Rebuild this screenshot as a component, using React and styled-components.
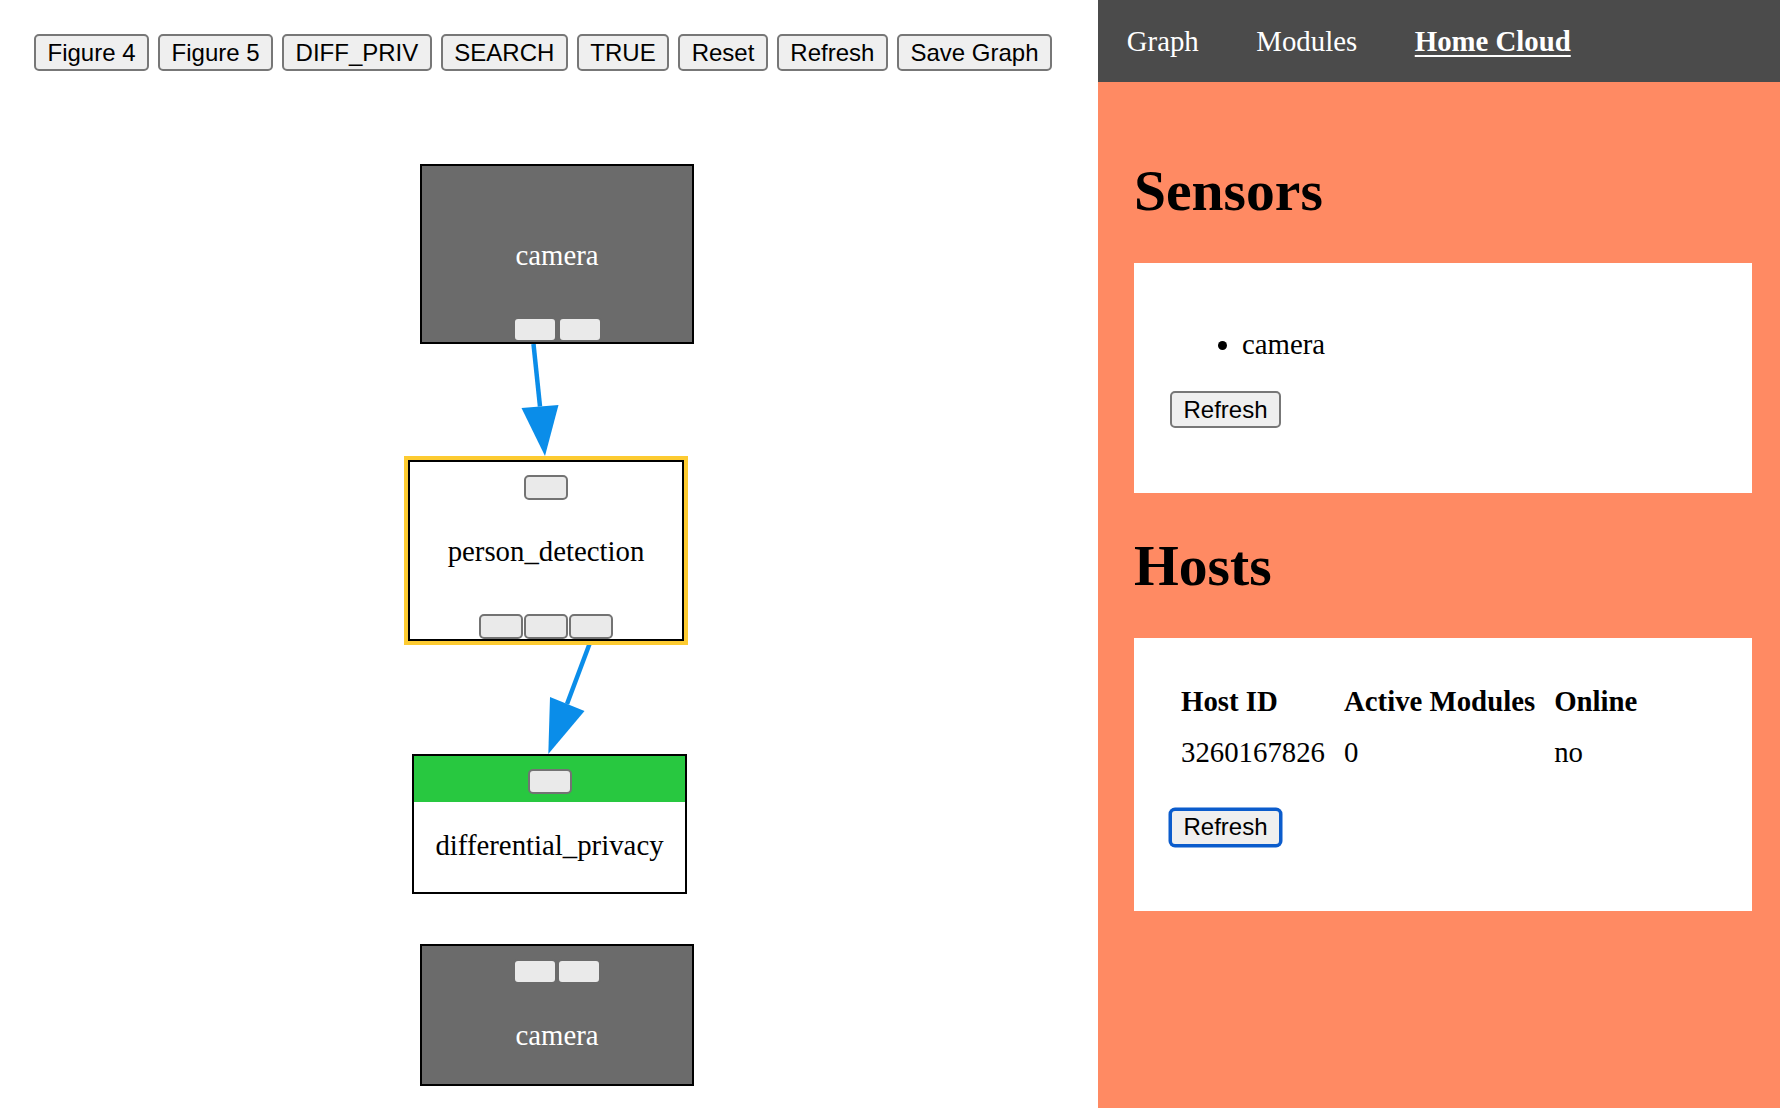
import React from 'react';
import styled, { createGlobalStyle } from 'styled-components';

const GlobalStyle = createGlobalStyle`
  html, body {
    margin: 0;
    padding: 0;
    background: #ffffff;
  }

  body {
    font-family: "Liberation Serif", "Times New Roman", serif;
    font-size: 28.8px;
    color: #000000;
  }
`;

// graph canvas starts right under the toolbar
const CANVAS_TOP = 71;

const NODES = [
  {
    id: 'camera-1',
    label: 'camera',
    x: 420,
    y: 164,
    w: 274,
    h: 180,
    dark: true,
    top: 0,
    bottom: 2,
  },
  {
    id: 'person-detection',
    label: 'person_detection',
    x: 408,
    y: 460,
    w: 276,
    h: 181,
    selected: true,
    top: 1,
    bottom: 3,
  },
  {
    id: 'differential-privacy',
    label: 'differential_privacy',
    x: 412,
    y: 754,
    w: 275,
    h: 140,
    header: '#28c840',
    top: 1,
    bottom: 0,
  },
  {
    id: 'camera-2',
    label: 'camera',
    x: 420,
    y: 944,
    w: 274,
    h: 142,
    dark: true,
    top: 2,
    bottom: 0,
  },
];

const EDGES = [
  { id: 'e1', from: [533.5, 344], to: [540, 406.5], head: '545,456 521.5,408 558.5,405' },
  { id: 'e2', from: [591, 640], to: [567, 704], head: '548.3,754 550,697 584.5,711' },
];

const TOOLBAR = ['Figure 4', 'Figure 5', 'DIFF_PRIV', 'SEARCH', 'TRUE', 'Reset', 'Refresh', 'Save Graph'];

const range = (n) => Array.from({ length: n }, (_, i) => i);

const GraphNode = ({ node }) => (
  <NodeBox
    $dark={node.dark}
    $selected={node.selected}
    style={{ left: node.x, top: node.y - CANVAS_TOP, width: node.w, height: node.h }}
  >
    <NodeHeader $fill={node.header}>
      {range(node.top).map((i) => <Port key={i} $dark={node.dark} />)}
    </NodeHeader>
    <NodeLabel $dark={node.dark}>{node.label}</NodeLabel>
    <NodeFooter>
      {range(node.bottom).map((i) => <Port key={i} $dark={node.dark} />)}
    </NodeFooter>
  </NodeBox>
);

const App = () => (
  <Page>
    <GlobalStyle />
    <GraphPane>
      <Toolbar>
        {TOOLBAR.map((label) => (
          <Button key={label}>{label}</Button>
        ))}
      </Toolbar>
      <Canvas>
        <Edges width="1098" height="1037" viewBox={`0 ${CANVAS_TOP} 1098 1037`}>
          {EDGES.map((e) => (
            <g key={e.id}>
              <line
                x1={e.from[0]}
                y1={e.from[1]}
                x2={e.to[0]}
                y2={e.to[1]}
                stroke="#0a8de9"
                strokeWidth="4.5"
              />
              <polygon points={e.head} fill="#0a8de9" />
            </g>
          ))}
        </Edges>
        {NODES.map((node) => (
          <GraphNode key={node.id} node={node} />
        ))}
      </Canvas>
    </GraphPane>

    <SidePanel>
      <Nav>
        <NavLink>Graph</NavLink>
        <NavLink>Modules</NavLink>
        <NavLink $active>Home Cloud</NavLink>
      </Nav>
      <PanelBody>
        <Heading>Sensors</Heading>
        <Card>
          <SensorList>
            <li>camera</li>
          </SensorList>
          <ButtonRow>
            <Button>Refresh</Button>
          </ButtonRow>
        </Card>

        <Heading>Hosts</Heading>
        <Card>
          <HostTable>
            <thead>
              <tr>
                <th>Host ID</th>
                <th>Active Modules</th>
                <th>Online</th>
              </tr>
            </thead>
            <tbody>
              <tr>
                <td>3260167826</td>
                <td>0</td>
                <td>no</td>
              </tr>
            </tbody>
          </HostTable>
          <TableButtonRow>
            <Button $focused>Refresh</Button>
          </TableButtonRow>
        </Card>
      </PanelBody>
    </SidePanel>
  </Page>
);

export default App;

// region STYLES

const Page = styled.div`
  display: flex;
  width: 100%;
  height: 100vh;
  overflow: hidden;
`;

const GraphPane = styled.div`
  width: 1098px;
  flex-shrink: 0;
  display: flex;
  flex-direction: column;
  background: #ffffff;
`;

const Toolbar = styled.div`
  display: flex;
  gap: 9px;
  padding: 34px 0 0 34px;
`;

const Button = styled.button`
  height: 37px;
  padding: 0 11.5px;
  font-family: "Liberation Sans", Arial, sans-serif;
  font-size: 24px;
  color: #000000;
  background: #efefef;
  border: 2px solid ${({ $focused }) => ($focused ? '#0b5ccc' : '#777777')};
  border-radius: 5px;
  box-shadow: ${({ $focused }) => ($focused ? '0 0 0 1.5px #0b5ccc' : 'none')};
  white-space: nowrap;
  cursor: pointer;
`;

const Canvas = styled.div`
  position: relative;
  flex: 1;
`;

const Edges = styled.svg`
  position: absolute;
  left: 0;
  top: 0;
`;

const NodeBox = styled.div`
  position: absolute;
  box-sizing: border-box;
  display: flex;
  flex-direction: column;
  border: 2px solid #000000;
  background: ${({ $dark }) => ($dark ? '#6b6b6b' : '#ffffff')};
  box-shadow: ${({ $selected }) => ($selected ? '0 0 0 4px #fdcb31' : 'none')};
`;

const NodeHeader = styled.div`
  height: 46px;
  flex-shrink: 0;
  box-sizing: border-box;
  display: flex;
  justify-content: center;
  align-items: flex-start;
  padding-top: 13px;
  background: ${({ $fill }) => $fill || 'transparent'};
`;

const NodeLabel = styled.div`
  margin-top: 27px;
  text-align: center;
  font-size: 28.8px;
  line-height: 32px;
  color: ${({ $dark }) => ($dark ? '#ffffff' : '#000000')};
`;

const NodeFooter = styled.div`
  margin-top: auto;
  display: flex;
  justify-content: center;
  gap: 1px;
`;

const Port = styled.div`
  width: 44px;
  height: 25px;
  box-sizing: border-box;
  background: #eaeaea;
  border: 2px solid ${({ $dark }) => ($dark ? '#6b6b6b' : '#737373')};
  border-radius: 5px;
`;

const SidePanel = styled.div`
  flex: 1;
  display: flex;
  flex-direction: column;
  background: #ff8a63;
`;

const Nav = styled.nav`
  height: 82px;
  display: flex;
  align-items: center;
  background: #4b4b4b;
`;

const NavLink = styled.a`
  padding: 0 28.8px;
  color: #ffffff;
  font-size: 28.8px;
  font-weight: ${({ $active }) => ($active ? 700 : 400)};
  text-decoration: ${({ $active }) => ($active ? 'underline' : 'none')};
  text-underline-offset: 4px;
  cursor: pointer;
`;

const PanelBody = styled.div`
  padding: 36px 28px 0 36px;
`;

const Heading = styled.h1`
  margin: 38.6px 0;
  font-size: 57.6px;
  font-weight: 700;
  line-height: 67.5px;
`;

const Card = styled.div`
  background: #ffffff;
  padding: 36px;
`;

const SensorList = styled.ul`
  margin: 28.8px 0;
  padding-left: 72px;
  line-height: 35px;
`;

const ButtonRow = styled.div`
  margin-bottom: 28.8px;
`;

const TableButtonRow = styled.div`
  margin: 30px 0 28.8px;
`;

const HostTable = styled.table`
  border-spacing: 3.6px;
  font-size: 28.8px;

  th,
  td {
    padding: 8px;
    text-align: left;
    line-height: 32px;
  }

  th {
    font-weight: 700;
  }
`;

// endregion
